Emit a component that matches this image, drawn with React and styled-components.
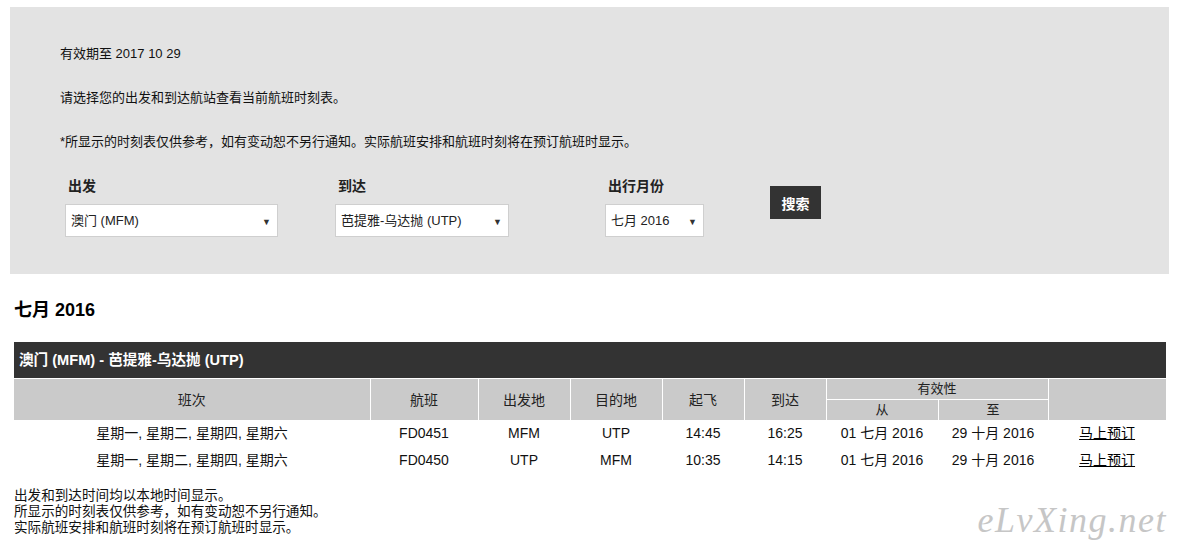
import React from 'react';
import styled, { createGlobalStyle } from 'styled-components';

const GlobalStyle = createGlobalStyle`
  body {
    margin: 0;
    background: #fff;
    font-family: "Liberation Sans", Arial, "Noto Sans CJK SC", sans-serif;
    font-size: 12px;
    color: #000;
  }
`;

const Page = styled.div`
  position: relative;
  width: 1179px;
  height: 553px;
  padding: 7px 10px 0;
  box-sizing: border-box;
  overflow: hidden;
`;

const SearchPanel = styled.div`
  background: #e3e3e3;
  padding: 39px 50px 37px;
`;

const Note = styled.p`
  margin: 0 0 ${(p) => (p.$last ? 0 : 28)}px;
  line-height: 16px;
  font-size: 13px;
  color: #111;
`;

const FormRow = styled.div`
  display: flex;
  align-items: flex-start;
  padding-left: 5px;
  margin-top: 30px;
`;

const Field = styled.div`
  width: 270px;
  display: flex;
  flex-direction: column;
`;

const Label = styled.label`
  font-weight: bold;
  font-size: 14px;
  line-height: 18px;
  color: #222;
  padding-left: 3px;
  margin-top: -3px;
  margin-bottom: 9px;
`;

const SelectBox = styled.div`
  width: ${(p) => p.$w}px;
  height: 33px;
  box-sizing: border-box;
  background: #fff;
  border: 1px solid #cfcfcf;
  display: flex;
  align-items: center;
  justify-content: space-between;
  padding: 0 6px 0 5px;
  font-size: 13px;
  line-height: 16px;
  color: #222;
`;

const Arrow = styled.span`
  font-size: 9px;
  color: #333;
  margin-top: 3px;
`;

const SearchButton = styled.button`
  margin-top: 6px;
  margin-left: -105px;
  width: 51px;
  height: 33px;
  background: #333;
  border: 0;
  color: #fff;
  font-family: inherit;
  font-weight: bold;
  font-size: 14px;
  padding: 0;
`;

const MonthTitle = styled.h2`
  margin: 23px 0 0 4px;
  font-size: 18px;
  line-height: 26px;
  font-weight: bold;
`;

const Table = styled.table`
  margin: 19px 0 0 4px;
  width: 1152px;
  border-collapse: collapse;
  table-layout: fixed;
`;

const RouteCell = styled.th`
  background: #333;
  color: #fff;
  text-align: left;
  font-size: 14.6px;
  line-height: 18px;
  font-weight: bold;
  height: 36px;
  padding: 0 5px;
  border-bottom: 1px solid #fff;
`;

const HeadCell = styled.th`
  background: #cacaca;
  color: #222;
  font-weight: normal;
  font-size: ${(p) => (p.$small ? 13 : 14)}px;
  line-height: 16px;
  height: ${(p) => (p.$small ? '20px' : '41px')};
  padding: 0;
  border: 1px solid #fff;
  border-top: 0;
  &:first-child { border-left: 0; }
  &:last-child { border-right: 0; }
`;

const Cell = styled.td`
  text-align: center;
  height: 24px;
  padding: 0 0 3px;
  font-size: 14px;
  line-height: 16px;
  color: #111;
`;

const BookLink = styled.a`
  color: #000;
  text-decoration: underline;
`;

const Footnotes = styled.div`
  margin: 13px 0 0 4px;
  font-size: 13.6px;
  line-height: 16px;
  color: #111;
`;

const Watermark = styled.div`
  position: absolute;
  right: 12px;
  bottom: 12px;
  font-family: "Liberation Serif", serif;
  font-style: italic;
  font-size: 36px;
  color: #c6c6c6;
  letter-spacing: 1.5px;
`;

const rows = [
  ['FD0451', 'MFM', 'UTP', '14:45', '16:25'],
  ['FD0450', 'UTP', 'MFM', '10:35', '14:15'],
];

const widths = [356, 108, 92, 92, 82, 82, 112, 110, 118];

export default function App() {
  return (
    <Page>
      <GlobalStyle />
      <SearchPanel>
        <Note>有效期至 2017 10 29</Note>
        <Note>请选择您的出发和到达航站查看当前航班时刻表。</Note>
        <Note $last>
          *所显示的时刻表仅供参考，如有变动恕不另行通知。实际航班安排和航班时刻将在预订航班时显示。
        </Note>
        <FormRow>
          <Field>
            <Label>出发</Label>
            <SelectBox $w={213}>
              <span>澳门 (MFM)</span>
              <Arrow>▼</Arrow>
            </SelectBox>
          </Field>
          <Field>
            <Label>到达</Label>
            <SelectBox $w={174}>
              <span>芭提雅-乌达抛 (UTP)</span>
              <Arrow>▼</Arrow>
            </SelectBox>
          </Field>
          <Field>
            <Label>出行月份</Label>
            <SelectBox $w={99}>
              <span>七月 2016</span>
              <Arrow>▼</Arrow>
            </SelectBox>
          </Field>
          <SearchButton>搜索</SearchButton>
        </FormRow>
      </SearchPanel>

      <MonthTitle>七月 2016</MonthTitle>

      <Table>
        <colgroup>
          {widths.map((w, i) => (
            <col key={i} style={{ width: w }} />
          ))}
        </colgroup>
        <thead>
          <tr>
            <RouteCell colSpan={9}>澳门 (MFM) - 芭提雅-乌达抛 (UTP)</RouteCell>
          </tr>
          <tr>
            <HeadCell rowSpan={2}>班次</HeadCell>
            <HeadCell rowSpan={2}>航班</HeadCell>
            <HeadCell rowSpan={2}>出发地</HeadCell>
            <HeadCell rowSpan={2}>目的地</HeadCell>
            <HeadCell rowSpan={2}>起飞</HeadCell>
            <HeadCell rowSpan={2}>到达</HeadCell>
            <HeadCell colSpan={2} $small>有效性</HeadCell>
            <HeadCell rowSpan={2}></HeadCell>
          </tr>
          <tr>
            <HeadCell $small>从</HeadCell>
            <HeadCell $small>至</HeadCell>
          </tr>
        </thead>
        <tbody>
          {rows.map((r) => (
            <tr key={r[0]}>
              <Cell>星期一, 星期二, 星期四, 星期六</Cell>
              {r.map((v, i) => (
                <Cell key={i}>{v}</Cell>
              ))}
              <Cell>01 七月 2016</Cell>
              <Cell>29 十月 2016</Cell>
              <Cell>
                <BookLink href="#">马上预订</BookLink>
              </Cell>
            </tr>
          ))}
        </tbody>
      </Table>

      <Footnotes>
        出发和到达时间均以本地时间显示。
        <br />
        所显示的时刻表仅供参考，如有变动恕不另行通知。
        <br />
        实际航班安排和航班时刻将在预订航班时显示。
      </Footnotes>

      <Watermark>eLvXing.net</Watermark>
    </Page>
  );
}
